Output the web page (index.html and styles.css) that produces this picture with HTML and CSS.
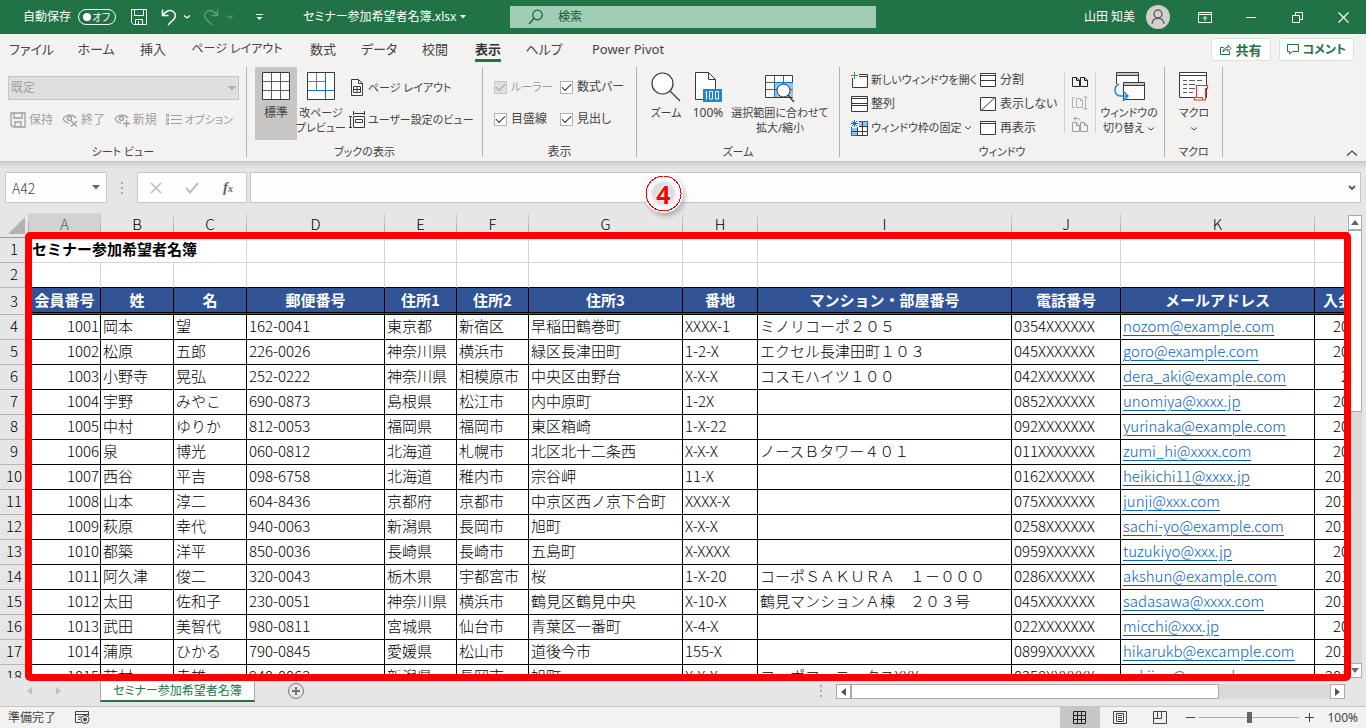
FILE: index.html
```html
<!DOCTYPE html>
<html lang="ja">
<head>
<meta charset="utf-8">
<title>セミナー参加希望者名簿.xlsx</title>
<link rel="stylesheet" href="styles.css">
</head>
<body>
<header class="titlebar">
  <div class="title-left">
    <span class="autosave">自動保存</span>
    <button class="toggle" aria-label="自動保存 オフ"><span class="knob"></span><span>オフ</span></button>
    <div class="quick">
      <button aria-label="上書き保存"><svg width="18" height="18" fill="none" stroke="#fff"><path d="M1.500 1.500h15v15h-13l-2-2zM4.500 1.500v6h9v-6M5.500 16.500v-5h7v5M8.500 16v-3"/></svg></button>
      <button class="drop" aria-label="元に戻す"><svg width="16" height="18" fill="none" stroke="#fff" stroke-width="1.500"><path d="M1.500 1.500v6h6M1.500 7.500C5 3 9 1.500 12 3.500c3 2 3 5 1 7.500l-6 6"/></svg><svg width="8" height="6" fill="none" stroke="#fff" stroke-width="1.300"><path d="M1 1.500l3 2.500 3-2.500"/></svg></button>
      <button class="drop faint" aria-label="やり直し"><svg width="16" height="18" fill="none" stroke="#fff" stroke-width="1.300"><path d="M13.500 1.500v6h-6M13.500 7.500C10 3 6 1.500 3 3.500c-3 2-3 5-1 7.500l6 6"/></svg><svg width="8" height="6" fill="none" stroke="#fff" stroke-width="1.300"><path d="M1 1.500l3 2.500 3-2.500"/></svg></button>
      <button class="custom" aria-label="カスタマイズ"><svg width="9" height="8" fill="none" stroke="#fff"><path d="M1 1.500h7" /><path d="M1.500 4h6L4.500 7z" fill="#fff" stroke="none"/></svg></button>
    </div>
    <button class="filename">セミナー参加希望者名簿.xlsx<svg width="6" height="4"><path d="M0 0h6L3 3.500z" fill="#fff"/></svg></button>
  </div>
  <label class="search"><svg width="16" height="16" fill="none" stroke="#185c37" stroke-width="1.200"><circle cx="9.500" cy="6" r="4.800"/><path d="M6 9.500L1 15"/></svg><input type="text" placeholder="検索"></label>
  <div class="title-right">
    <span class="user">山田 知美</span>
    <svg class="avatar" width="24" height="24" fill="none"><circle cx="12" cy="12" r="12" fill="#d2d0ce"/><circle cx="12" cy="9" r="4" stroke="#605e5c" stroke-width="1.400"/><path d="M6 19c0-3.500 2.500-5.800 6-5.800s6 2.300 6 5.800" stroke="#605e5c" stroke-width="1.400"/></svg>
    <button class="win" aria-label="リボンの表示オプション"><svg width="14" height="12" fill="none" stroke="#fff"><path d="M.5 1.500h13v10H.5zM.5 3.500h13M7 10V6M5 7.500L7 5.500l2 2"/></svg></button>
    <button class="win" aria-label="最小化"><svg width="10" height="10" stroke="#fff"><path d="M0 5.500h10"/></svg></button>
    <button class="win" aria-label="元に戻す"><svg width="11" height="11" fill="none" stroke="#fff"><path d="M.5 3.500h7v7h-7zM3.500 3V.5h7v7H8"/></svg></button>
    <button class="win" aria-label="閉じる"><svg width="11" height="11" fill="none" stroke="#fff" stroke-width="1.200"><path d="M.5.5l10 10M10.500.5l-10 10"/></svg></button>
  </div>
</header>

<nav class="tabs">
  <div class="tablist">
    <button>ファイル</button><button>ホーム</button><button>挿入</button><button class="long">ページ レイアウト</button><button>数式</button><button>データ</button><button>校閲</button><button class="on"><span>表示</span></button><button>ヘルプ</button><button>Power Pivot</button>
  </div>
  <div class="share">
    <button class="kanji"><svg width="12" height="11" fill="none" stroke="#217346"><path d="M3.500 3.500h-3v7h9v-3M3 8c.5-3 2-4.500 5-4.500V1l3 3.500-3 3V5.500C6 5.500 4.500 6 3 8z"/></svg>共有</button>
    <button><svg width="12" height="11" fill="none" stroke="#217346"><path d="M.5.5h11v7H5.500L2.500 10V7.500h-2z"/></svg>コメント</button>
  </div>
</nav>

<section class="ribbon">
  <div class="group g-view">
    <div class="body">
      <select disabled aria-label="シート ビュー"><option>既定</option></select>
      <div class="viewbtns">
        <button disabled><svg width="16" height="16" fill="none" stroke="#a19f9d" stroke-width="1.300"><path d="M1 1h14v14H3l-2-2zM4 1v5h8V1M5 15v-5h6v5"/></svg>保持</button>
        <button disabled><svg width="16" height="14" fill="none" stroke="#a19f9d" stroke-width="1.300"><path d="M1 6c3-5 10-5 13-1M1 6c2 3 4 4 6 4M9 8l6 5.500M15 8l-6 5.500"/><circle cx="7.500" cy="5.500" r="2"/></svg>終了</button>
        <button disabled><svg width="16" height="14" fill="none" stroke="#a19f9d" stroke-width="1.300"><path d="M1 6c3-5 10-5 13-1M1 6c2 3 4 4 6 4M9 10.500h7M12.500 7v7"/><circle cx="7.500" cy="5.500" r="2"/></svg>新規</button>
        <button class="kana" disabled><svg width="16" height="14" fill="none" stroke="#a19f9d"><path d="M.5 1.500h2v2h-2zM.5 5.500h2v2h-2zM.5 9.500h2v2h-2zM5 2.500h11M5 6.500h11M5 10.500h11"/></svg>オプション</button>
      </div>
    </div>
    <div class="caption">シート ビュー</div>
  </div>

  <div class="group g-book">
    <div class="body row">
      <button class="big on"><svg width="28" height="28" fill="none" stroke="#3b3a39"><path d="M.5.5h27v27H.5z" fill="#fff"/><path d="M9.500 1v26M18.500 1v26M1 9.500h26M1 18.500h26" stroke="#605e5c"/></svg><span>標準</span></button>
      <button class="big"><svg width="28" height="28" fill="none" stroke="#3b3a39"><path d="M.5.5h27v27H.5z" fill="#fff"/><path d="M9.500 1v17M1 9.500h17" stroke="#797775"/><path d="M18.500 1v26M1 18.500h26" stroke="#0078d4"/></svg><span>改ページ<br>プレビュー</span></button>
      <div class="stack">
        <button><svg width="16" height="18" fill="none" stroke="#3b3a39"><path d="M2.500.5h7l4 4v12h-11z" fill="#fff"/><path d="M9.500.5v4h4M4.500 7.500h7v6h-7zM8 7.500v6M4.500 10.500h7"/></svg>ページ レイアウト</button>
        <button><svg width="16" height="18" fill="none" stroke="#3b3a39"><path d="M4.500 5.500h11v11h-11z" fill="#fff"/><path d="M6.500 8.500h7v3h-7zM4.500 0v4M15.500 0v4M4.500 2.500h11M0 5.500h3M0 16.500h3M1.500 5.500v11"/></svg>ユーザー設定のビュー</button>
      </div>
    </div>
    <div class="caption">ブックの表示</div>
  </div>

  <div class="group g-show">
    <div class="body checks">
      <label class="dim"><input type="checkbox" checked disabled>ルーラー</label>
      <label><input type="checkbox" checked>数式バー</label>
      <label><input type="checkbox" checked>目盛線</label>
      <label><input type="checkbox" checked>見出し</label>
    </div>
    <div class="caption kanji">表示</div>
  </div>

  <div class="group g-zoom">
    <div class="body row">
      <button class="big"><svg width="30" height="28" fill="none" stroke="#3b3a39" stroke-width="1.200"><circle cx="11.500" cy="11.500" r="10.500" fill="#fff"/><path d="M19 19l10 10"/></svg><span>ズーム</span></button>
      <button class="big"><svg width="28" height="28" fill="none" stroke="#3b3a39"><path d="M1.500.5h13l7 7v20h-20z" fill="#fff"/><path d="M14.500.5v7h7"/><path d="M9 17h19v13H9z" fill="#1e88cf" stroke="none"/><path d="M11.500 20.500l1-1v8M15.500 19.500h3v7.500h-3zM21.500 19.500h3v7.500h-3z" stroke="#fff"/></svg><span class="pc">100%</span></button>
      <button class="big wide"><svg width="30" height="28" fill="none" stroke="#3b3a39"><path d="M.5.5h27v22H.5z" fill="#fff"/><path d="M10 8h18v14H10z" fill="#8fc5f0" stroke="none"/><path d="M9.500 1v21M18.500 1v21M1 7.500h27M1 14.500h27" stroke="#605e5c"/><path d="M9.500 22V7.500h18" stroke="#0078d4"/><circle cx="18.500" cy="15.500" r="6.500" fill="#fff"/><path d="M23 20l6 7" stroke-width="1.400"/></svg><span>選択範囲に合わせて<br>拡大/縮小</span></button>
    </div>
    <div class="caption">ズーム</div>
  </div>

  <div class="group g-window">
    <div class="body row">
      <div class="stack three first">
        <button><svg width="17" height="16" fill="none" stroke="#3b3a39"><path d="M1.500 6v9.500h15v-13H8" fill="#fff"/><path d="M8 4.500h8.500"/><path d="M3.500 0v7M0 3.500h7" stroke="#2e9e4a"/></svg>新しいウィンドウを開く</button>
        <button class="kanji"><svg width="17" height="16" fill="none" stroke="#3b3a39"><path d="M.5.5h16v15H.5z" fill="#fff"/><path d="M.5 2.500h16M.5 7.500h16M.5 9.500h16"/></svg>整列</button>
        <button><svg width="17" height="16" fill="none" stroke="#3b3a39"><path d="M.5 1.500h16v14H.5z" fill="#fff"/><path d="M8 2h9v4H8zM1 8h5v8H1z" fill="#8fc5f0" stroke="none"/><path d="M6.500 2v13M11.500 2v13M1 6.500h15M1 11.500h15"/><path d="M0 0h8v7H0z" fill="#f3f2f1" stroke="none"/><path d="M3.500 0v7M0 3.500h7M1 1l5 5M6 1L1 6M.5 8v7.500H6M8 1.500h8.500V6" stroke="#0078d4"/></svg>ウィンドウ枠の固定<svg class="chev" width="8" height="6" fill="none" stroke="#444"><path d="M1 1.500l3 2.500 3-2.500"/></svg></button>
      </div>
      <div class="stack three second">
        <button><svg width="17" height="15" fill="none" stroke="#3b3a39"><path d="M.5.5h15v13H.5z" fill="#fff"/><path d="M.5 2.500h15M.5 7.500h15"/></svg>分割</button>
        <button><svg width="17" height="15" fill="none" stroke="#3b3a39"><path d="M.5.5h15v13H.5z" fill="#fff"/><path d="M1 13.500l14-13"/></svg>表示しない</button>
        <button><svg width="17" height="15" fill="none" stroke="#3b3a39"><path d="M.5.5h15v13H.5z" fill="#fff"/><path d="M.5 2.500h15"/></svg>再表示</button>
      </div>
      <div class="stack icons">
        <button aria-label="並べて比較"><svg width="17" height="12" fill="none" stroke="#252423"><path d="M.5 1.500h4l3 3v6h-7zM4.500 1.500v3h3M8.500 1.500h4l3 3v6h-7zM12.500 1.500v3h3"/></svg></button>
        <button aria-label="同時にスクロール" disabled><svg width="17" height="16" fill="none" stroke="#b3b0ad"><path d="M2.500 2.500h-2v10h2M4.500 3.500h4l2 2v7h-6zM8.500 3.500v2h2M13.500 1v14M11.500 3l2-2 2 2M11.500 13l2 2 2-2"/></svg></button>
        <button aria-label="ウィンドウの位置を元に戻す" disabled><svg width="17" height="17" fill="none" stroke="#a19f9d"><path d="M.5 6.500h4l3 3v6h-7zM4.500 6.500v3h3M8.500 6.500h4l3 3v6h-7zM12.500 6.500v3h3M2 2.500h4c1 0 2 1 2 2M4 .5l-2 2 2 2"/></svg></button>
      </div>
      <button class="big switch"><svg width="31" height="28" fill="none" stroke="#3b3a39"><path d="M2.500 12V.5h22V10" fill="#fff"/><path d="M3 1h21v2H3z" fill="#c8c6c4" stroke="none"/><path d="M2.500 3.500h22"/><path d="M9.500 10.500h21v17h-21z" fill="#fff"/><path d="M10 11h20v2H10z" fill="#c8c6c4" stroke="none"/><path d="M9.500 13.500h21"/><path d="M5 12c-6 3-5 11 1 12h8M9 19l5 5-5 5" stroke="#1e88cf" stroke-width="1.500"/></svg><span>ウィンドウの<br>切り替え <svg class="chev" width="8" height="6" fill="none" stroke="#444"><path d="M1 1.500l3 2.500 3-2.500"/></svg></span></button>
    </div>
    <div class="caption">ウィンドウ</div>
  </div>

  <div class="group g-macro">
    <div class="body row">
      <button class="big"><svg width="30" height="28" fill="none" stroke="#3b3a39"><path d="M.5.5h27v25H.5z" fill="#fff"/><path d="M.5 3.500h27"/><path d="M4 8.500h4M10 8.500h6M18 8.500h5M4 12.500h4M10 12.500h6M4 16.500h4M10 16.500h6M4 20.500h4M10 20.500h4" stroke="#605e5c"/><path d="M17.500 25V13.500h11v3h-2V28H15.500v-2.500h8V28" fill="#fff" stroke="#e8383d" stroke-width="1.200"/></svg><span>マクロ<br><svg class="chev" width="8" height="6" fill="none" stroke="#444"><path d="M1 1.500l3 2.500 3-2.500"/></svg></span></button>
    </div>
    <div class="caption">マクロ</div>
  </div>
  <button class="collapse" aria-label="リボンを折りたたむ"><svg width="12" height="8" fill="none" stroke="#444" stroke-width="1.300"><path d="M1 6.500l5-4.500 5 4.500"/></svg></button>
</section>

<section class="formulabar">
  <label class="namebox"><input type="text" value="A42" aria-label="名前ボックス"><svg width="8" height="5"><path d="M0 0h8L4 4.500z" fill="#666"/></svg></label>
  <span class="dots"></span>
  <div class="fx">
    <button aria-label="キャンセル"><svg width="12" height="12" fill="none" stroke="#bdbdbd" stroke-width="1.600"><path d="M1 1l10 10M11 1L1 11"/></svg></button>
    <button aria-label="入力"><svg width="14" height="12" fill="none" stroke="#bdbdbd" stroke-width="2"><path d="M1 6l4 4.500L13 1"/></svg></button>
    <button class="fxb">f<small>x</small></button>
  </div>
  <label class="formula"><input type="text" aria-label="数式"><svg width="8" height="6" fill="none" stroke="#555" stroke-width="1.800"><path d="M1 1l3 3 3-3"/></svg></label>
  <div class="marker">4</div>
</section>

<main class="sheet">
  <div class="grid">
    <table>
      <colgroup><col class="w29"><col class="w72"><col class="w73"><col class="w73"><col class="w138"><col class="w72"><col class="w72"><col class="w154"><col class="w75"><col class="w254"><col class="w109"><col class="w194"><col class="w38"></colgroup>
      <thead>
        <tr class="letters"><th class="corner"><svg width="17" height="17"><path d="M17 0v17H0z" fill="#b2b2b2"/></svg></th><th class="sel">A</th><th>B</th><th>C</th><th>D</th><th>E</th><th>F</th><th>G</th><th>H</th><th>I</th><th>J</th><th>K</th><th></th></tr>
      </thead>
      <tbody>
        <tr class="plain"><th>1</th><td colspan="3" class="name">セミナー参加希望者名簿</td><td></td><td></td><td></td><td></td><td></td><td></td><td></td><td></td><td></td></tr>
        <tr class="plain last"><th>2</th><td></td><td></td><td></td><td></td><td></td><td></td><td></td><td></td><td></td><td></td><td></td><td></td></tr>
        <tr class="head"><th>3</th><td>会員番号</td><td>姓</td><td>名</td><td>郵便番号</td><td>住所1</td><td>住所2</td><td>住所3</td><td>番地</td><td>マンション・部屋番号</td><td>電話番号</td><td>メールアドレス</td><td>入会</td></tr>
        <tr><th>4</th><td>1001</td><td>岡本</td><td>望</td><td>162-0041</td><td>東京都</td><td>新宿区</td><td>早稲田鶴巻町</td><td>XXXX-1</td><td>ミノリコーポ２０５</td><td>0354XXXXXX</td><td><a href="#">nozom@example.com</a></td><td>20</td></tr>
        <tr><th>5</th><td>1002</td><td>松原</td><td>五郎</td><td>226-0026</td><td>神奈川県</td><td>横浜市</td><td>緑区長津田町</td><td>1-2-X</td><td>エクセル長津田町１０３</td><td>045XXXXXXX</td><td><a href="#">goro@example.com</a></td><td>20</td></tr>
        <tr><th>6</th><td>1003</td><td>小野寺</td><td>晃弘</td><td>252-0222</td><td>神奈川県</td><td>相模原市</td><td>中央区由野台</td><td>X-X-X</td><td>コスモハイツ１００</td><td>042XXXXXXX</td><td><a href="#">dera_aki@example.com</a></td><td>2</td></tr>
        <tr><th>7</th><td>1004</td><td>宇野</td><td>みやこ</td><td>690-0873</td><td>島根県</td><td>松江市</td><td>内中原町</td><td>1-2X</td><td></td><td>0852XXXXXX</td><td><a href="#">unomiya@xxxx.jp</a></td><td>20</td></tr>
        <tr><th>8</th><td>1005</td><td>中村</td><td>ゆりか</td><td>812-0053</td><td>福岡県</td><td>福岡市</td><td>東区箱崎</td><td>1-X-22</td><td></td><td>092XXXXXXX</td><td><a href="#">yurinaka@example.com</a></td><td>20</td></tr>
        <tr><th>9</th><td>1006</td><td>泉</td><td>博光</td><td>060-0812</td><td>北海道</td><td>札幌市</td><td>北区北十二条西</td><td>X-X-X</td><td>ノースＢタワー４０１</td><td>011XXXXXXX</td><td><a href="#">zumi_hi@xxxx.com</a></td><td>20</td></tr>
        <tr><th>10</th><td>1007</td><td>西谷</td><td>平吉</td><td>098-6758</td><td>北海道</td><td>稚内市</td><td>宗谷岬</td><td>11-X</td><td></td><td>0162XXXXXX</td><td><a href="#">heikichi11@xxxx.jp</a></td><td>201</td></tr>
        <tr><th>11</th><td>1008</td><td>山本</td><td>淳二</td><td>604-8436</td><td>京都府</td><td>京都市</td><td>中京区西ノ京下合町</td><td>XXXX-X</td><td></td><td>075XXXXXXX</td><td><a href="#">junji@xxx.com</a></td><td>201</td></tr>
        <tr><th>12</th><td>1009</td><td>萩原</td><td>幸代</td><td>940-0063</td><td>新潟県</td><td>長岡市</td><td>旭町</td><td>X-X-X</td><td></td><td>0258XXXXXX</td><td><a href="#">sachi-yo@example.com</a></td><td>201</td></tr>
        <tr><th>13</th><td>1010</td><td>都築</td><td>洋平</td><td>850-0036</td><td>長崎県</td><td>長崎市</td><td>五島町</td><td>X-XXXX</td><td></td><td>0959XXXXXX</td><td><a href="#">tuzukiyo@xxx.jp</a></td><td>20</td></tr>
        <tr><th>14</th><td>1011</td><td>阿久津</td><td>俊二</td><td>320-0043</td><td>栃木県</td><td>宇都宮市</td><td>桜</td><td>1-X-20</td><td>コーポＳＡＫＵＲＡ　１－０００</td><td>0286XXXXXX</td><td><a href="#">akshun@example.com</a></td><td>201</td></tr>
        <tr><th>15</th><td>1012</td><td>太田</td><td>佐和子</td><td>230-0051</td><td>神奈川県</td><td>横浜市</td><td>鶴見区鶴見中央</td><td>X-10-X</td><td>鶴見マンションＡ棟　２０３号</td><td>045XXXXXXX</td><td><a href="#">sadasawa@xxxx.com</a></td><td>201</td></tr>
        <tr><th>16</th><td>1013</td><td>武田</td><td>美智代</td><td>980-0811</td><td>宮城県</td><td>仙台市</td><td>青葉区一番町</td><td>X-4-X</td><td></td><td>022XXXXXXX</td><td><a href="#">micchi@xxx.jp</a></td><td>20</td></tr>
        <tr><th>17</th><td>1014</td><td>蒲原</td><td>ひかる</td><td>790-0845</td><td>愛媛県</td><td>松山市</td><td>道後今市</td><td>155-X</td><td></td><td>0899XXXXXX</td><td><a href="#">hikarukb@excample.com</a></td><td>201</td></tr>
        <tr><th>18</th><td>1015</td><td>荻村</td><td>幸雄</td><td>940-0063</td><td>新潟県</td><td>長岡市</td><td>旭町</td><td>X-X-X</td><td>コーポフェニックスXXX</td><td>0258XXXXXX</td><td><a href="#">yukii_o@example.com</a></td><td>201</td></tr>
      </tbody>
    </table>
  </div>
  <div class="vscroll">
    <button aria-label="上へ"><svg width="8" height="5"><path d="M0 5h8L4 0z" fill="#666"/></svg></button>
    <div class="vtrack"><div class="vthumb"></div></div>
    <button aria-label="下へ"><svg width="8" height="5"><path d="M0 0h8L4 5z" fill="#666"/></svg></button>
  </div>
  <div class="frame"></div>
</main>

<section class="sheettabs">
  <div class="arrows"><svg width="5" height="8"><path d="M5 0v8L0 4z" fill="#c0c0c0"/></svg><svg width="5" height="8"><path d="M0 0v8l5-4z" fill="#c0c0c0"/></svg></div>
  <button class="sheettab">セミナー参加希望者名簿</button>
  <button class="add" aria-label="新しいシート"><svg width="18" height="18" fill="none" stroke="#777"><circle cx="9" cy="9" r="7.500"/><path d="M9 5v8M5 9h8" stroke-width="2"/></svg></button>
  <span class="dots"></span>
  <div class="hscroll">
    <button aria-label="左へ"><svg width="5" height="8"><path d="M5 0v8L0 4z" fill="#555"/></svg></button>
    <div class="htrack"><div class="hthumb"></div></div>
    <button aria-label="右へ"><svg width="5" height="8"><path d="M0 0v8l5-4z" fill="#555"/></svg></button>
  </div>
</section>

<footer class="status">
  <span class="ready">準備完了</span>
  <svg width="15" height="13" fill="none" stroke="#444"><path d="M6 11.500H.5v-11h13V5M.5 3.500h13M3 6h3M3 8.500h2"/><circle cx="10" cy="8.500" r="4"/><circle cx="10" cy="8.500" r="1.500" fill="#444"/></svg>
  <div class="views">
    <button class="on" aria-label="標準"><svg width="14" height="14" fill="none" stroke="#222"><path d="M.5.5h12v12H.5zM4.500.5v12M8.500.5v12M.5 4.500h12M.5 8.500h12"/></svg></button>
    <button aria-label="ページ レイアウト"><svg width="14" height="14" fill="none" stroke="#444"><path d="M.5.5h13v12H.5zM3.500 2.500h7v8h-7zM5 4.500h4M5 6.500h4M5 8.500h4"/></svg></button>
    <button aria-label="改ページ プレビュー"><svg width="14" height="14" fill="none" stroke="#444"><path d="M.5.5h13v12H.5zM4.500.5v7M8.500.5v7M.5 7.500h8"/></svg></button>
  </div>
  <button class="pm" aria-label="縮小"><svg width="9" height="9" stroke="#444"><path d="M0 4.500h9"/></svg></button>
  <input type="range" min="0" max="100" value="50" aria-label="ズーム">
  <button class="pm" aria-label="拡大"><svg width="9" height="9" stroke="#444"><path d="M0 4.500h9M4.500 0v9"/></svg></button>
  <span class="pct">100%</span>
</footer>
</body>
</html>
```
FILE: styles.css
```css
* { box-sizing: border-box; }
body {
  margin: 0;
  height: 100vh;
  display: flex;
  flex-direction: column;
  overflow: hidden;
  background: #e6e6e6;
  color: #444;
  font: 12px/16px "Noto Sans", "Noto Sans CJK JP", sans-serif;
  font-feature-settings: "palt";
  white-space: nowrap;
}
button, input, select { font: inherit; font-feature-settings: inherit; color: inherit; }
button { border: 0; padding: 0; background: none; white-space: nowrap; }
input { border: 0; padding: 0; background: none; min-width: 0; outline: 0; }
svg { display: block; flex: none; }

/* title bar */
.titlebar { height: 34px; flex: none; display: grid; grid-template-columns: 510px 366px 1fr; align-items: center; background: #217346; color: #fff; }
.title-left { display: flex; align-items: center; padding-left: 23px; }
.autosave { width: 55px; }
.toggle { width: 38px; height: 16px; display: flex; align-items: center; justify-content: space-between; border: 1px solid #fff; border-radius: 8px; padding: 0 5px 0 4px; font-size: 10px; line-height: 12px; }
.knob { width: 8px; height: 8px; border-radius: 4px; background: #fff; }
.quick { display: flex; align-items: center; padding-left: 14px; width: 187px; gap: 13px; }
.drop { display: flex; align-items: center; gap: 6px; }
.drop.faint { opacity: .3; }
.custom { padding-left: 8px; }
.filename { display: flex; align-items: center; gap: 4px; }
.search { height: 22px; display: flex; align-items: center; gap: 14px; padding-left: 18px; background: #9fcdb5; }
.search input { flex: 1; }
.search input::placeholder { color: #185c37; opacity: 1; }
.title-right { display: flex; align-items: center; justify-content: flex-end; }
.avatar { margin: 0 12px 0 11px; }
.win { width: 46px; height: 34px; display: grid; place-items: center; }

/* ribbon tabs */
.tabs { height: 32px; flex: none; display: flex; justify-content: space-between; background: #f3f2f1; }
.tablist { display: grid; grid-template-columns: 63px 66px 48px 120px 52px 60px 52px 54px 58px 110px; font-size: 13px; }
.tablist button { padding-bottom: 2px; }
.tablist .long { font-size: 12px; }
.tablist .on { font-weight: 700; color: #333; display: grid; justify-items: center; }
.tablist .on span { border-bottom: 3px solid #217346; height: 22px; line-height: 18px; align-self: end; margin-bottom: 2px; }
.share { display: flex; gap: 8px; padding: 4px 12px 4px 0; }
.share button { display: flex; align-items: center; gap: 4px; padding: 0 7px; height: 23px; background: #fff; border: 1px solid #e1dfdd; border-radius: 2px; color: #217346; font-weight: 700; }
.share .kanji { font-size: 13px; padding: 0 8px; }

/* ribbon */
.ribbon { height: 95px; flex: none; display: flex; background: #f3f2f1; padding: 1px 0 4px; font-size: 11px; }
.group { flex: none; display: flex; flex-direction: column; justify-content: space-between; border-right: 1px solid #b3b0ad; height: 90px; }
.caption { text-align: center; line-height: 11px; }
.ribbon .kanji { font-size: 12px; }
.row { display: flex; }
.g-view { width: 247px; }
.g-book { width: 236px; }
.g-show { width: 154px; }
.g-zoom { width: 203px; }
.g-window { width: 325px; }
.g-macro { width: 58px; }
.g-view .body { padding: 9px 7px 0 8px; }
.g-view select { width: 100%; height: 24px; border: 1px solid #c8c6c4; background: #e1dfdd; color: #a19f9d; appearance: none; padding: 0 2px; opacity: 1; font-size: 12px;
  background-image: linear-gradient(45deg, transparent 50%, #b3b0ad 50%), linear-gradient(-45deg, transparent 50%, #b3b0ad 50%);
  background-size: 4px 4px; background-position: right 6px top 9px, right 2px top 9px; background-repeat: no-repeat; }
.viewbtns { display: flex; justify-content: space-between; padding: 12px 6px 0 2px; }
.viewbtns button { display: flex; align-items: center; gap: 3px; color: #a19f9d; font-size: 12px; }
.viewbtns .kana { font-size: 11px; }
.big { flex: none; width: 42px; height: 73px; display: flex; flex-direction: column; align-items: center; padding-top: 5px; gap: 5px; line-height: 15px; }
.big svg { overflow: visible; }
.big span { display: block; }
.big.on { background: #c8c6c4; font-size: 12px; }
.big .pc { font-size: 12px; }
.g-book .row { padding-left: 8px; gap: 3px; }
.g-book .row .stack { padding: 12px 0 0 4px; gap: 14px; }
.stack { display: flex; flex-direction: column; align-items: flex-start; }
.stack button { display: flex; align-items: center; gap: 3px; height: 18px; }
.checks { display: grid; grid-template-columns: 66px 1fr; row-gap: 16px; padding: 12px 0 0 11px; font-size: 12px; }
.checks label { display: flex; align-items: center; gap: 4px; }
.checks .dim { color: #a19f9d; font-size: 11px; }
.checks input { appearance: none; width: 13px; height: 13px; margin: 0; border: 1px solid #b3b0ad; background: #fff; display: grid; place-items: center; }
.checks input::after { content: ""; width: 8px; height: 4px; border: solid #333; border-width: 0 0 1px 1px; transform: rotate(-45deg) translate(1px, -1px); }
.checks .dim input { background: #e1dfdd; border-color: #c8c6c4; }
.checks .dim input::after { border-color: #a19f9d; }
.g-zoom .row { padding-left: 8px; }
.big.wide { width: 102px; padding-top: 8px; gap: 2px; }
.g-window .row { padding-left: 11px; }
.three { gap: 6px; padding-top: 4px; }
.first { width: 129px; }
.second { width: 84px; font-size: 12px; }
.icons { border: solid #d2d0ce; border-width: 0 1px; width: 32px; height: 60px; margin-top: 6px; padding-left: 7px; justify-content: space-between; }
.big.switch { width: 66px; }
.chev { display: inline-block; vertical-align: middle; }
.g-macro .row { padding-left: 8px; }
.collapse { margin-left: auto; align-self: flex-end; padding: 0 8px 0 0; }

/* formula bar */
.formulabar { height: 52px; flex: none; display: flex; padding: 10px 5px; position: relative; border-top: 1px solid #c8c8c8; background: linear-gradient(#cfcfcf, #e6e6e6 7px); }
.namebox, .fx, .formula { display: flex; align-items: center; height: 31px; border: 1px solid #c6c6c6; background: #fdfdfd; }
.namebox { width: 102px; padding: 0 6px; justify-content: space-between; font: 300 14px/20px "Noto Sans CJK JP", sans-serif; }
.namebox input { width: 60px; }
.dots { width: 30px; display: grid; place-items: center; }
.dots::after { content: ""; width: 2px; height: 12px; background: repeating-linear-gradient(#aaa 0 2px, transparent 2px 5px); }
.fx { width: 110px; }
.fx button { flex: 1; display: grid; place-items: center; }
.fx .fxb { display: block; font: italic 700 15px/20px "Liberation Serif", serif; color: #666; }
.fx small { font-size: 10px; }
.formula { flex: 1; margin-left: 3px; padding-right: 4px; }
.formula input { flex: 1; }
.marker { position: absolute; left: 644px; top: 12px; width: 39px; height: 39px; border-radius: 50%; display: grid; place-items: center; z-index: 5;
  background: radial-gradient(circle, #ddd 0 10px, #fff 14px 17px, #f00 17px 18px, #fff 18px);
  box-shadow: 2px 3px 5px rgba(0, 0, 0, .25);
  color: #f00; font: 700 25px/36px "Noto Sans", sans-serif; text-shadow: 0 0 3px #fff, 0 0 3px #fff, 0 0 2px #fff; }

/* worksheet */
.sheet { flex: 1; min-height: 0; display: flex; position: relative; }
.grid { flex: 1; min-width: 0; overflow: hidden; background: #fff; }
table { table-layout: fixed; width: 1353px; border-collapse: separate; border-spacing: 0; font: 300 15px/22px "Noto Sans CJK JP", sans-serif; font-feature-settings: normal; color: #000; }
.w29 { width: 29px; } .w38 { width: 38px; } .w72 { width: 72px; } .w73 { width: 73px; } .w75 { width: 75px; } .w109 { width: 109px; }
.w138 { width: 138px; } .w154 { width: 154px; } .w194 { width: 194px; } .w254 { width: 254px; }
th { font-weight: 300; padding: 0; background: #e6e6e6; color: #000; text-align: center; vertical-align: top; height: 25px; border-bottom: 1px solid #b5b5b5; border-right: 1px solid #b5b5b5; overflow: hidden; }
.letters th { border-right: 1px solid; border-image: linear-gradient(#d8d8d8, #999) 1; }
.letters .sel { background: #d2d2d2; color: #217346; }
.letters .corner { vertical-align: middle; }
.corner svg { margin-left: 8px; }
td { height: 25px; padding: 0 2px; border: solid #000; border-width: 0 1px 1px 0; vertical-align: top; overflow: hidden; background: #fff; }
td:nth-child(2) { text-align: right; padding-right: 1px; }
td:nth-child(13) { text-align: right; padding: 0 3px 0 0; }
.plain td { border-color: #d4d4d4; }
.plain.last td { border-bottom-color: #000; }
.plain .name { text-align: left; font-weight: 700; padding-left: 3px; }
.head td { height: 27px; border-bottom: 3px double #000; background: #305496; color: #fff; font-weight: 700; text-align: center; vertical-align: middle; }
.head td:nth-child(2) { text-align: center; padding: 0 2px; }
.head td:nth-child(13) { text-align: left; padding: 0 0 0 8px; }
.head th { vertical-align: middle; }
td a { color: #0563c1; text-decoration: underline; text-underline-offset: 3px; }
.vscroll { width: 18px; flex: none; display: flex; flex-direction: column; padding: 2px 4px 0 0; }
.vscroll button { height: 15px; display: grid; place-items: center; background: #fff; border: 1px solid #ababab; }
.vtrack { flex: 1; background: #dadada; }
.vthumb { height: 42%; background: #fff; border: 1px solid #ababab; }
.frame { position: absolute; inset: 19px 15px -3px 25px; border: 7px solid #f00; border-radius: 5px; z-index: 4; }

/* sheet tabs */
.sheettabs { height: 28px; flex: none; display: flex; padding-right: 21px; align-items: flex-start; }
.arrows { width: 100px; height: 26px; display: flex; align-items: center; gap: 24px; padding-left: 27px; }
.sheettab { width: 155px; height: 24px; padding-top: 3px; background: #fff; color: #217346; border: solid #ababab; border-width: 0 1px; border-bottom: 2px solid #217346; }
.add { padding: 4px 0 0 32px; }
.sheettabs .dots { margin-left: auto; height: 26px; }
.hscroll { width: 509px; height: 15px; margin-top: 6px; display: flex; }
.hscroll button { width: 15px; display: grid; place-items: center; background: #fff; border: 1px solid #ababab; }
.htrack { flex: 1; background: #dadada; }
.hthumb { width: 368px; height: 15px; background: #fff; border: 1px solid #ababab; }

/* status bar */
.status { height: 22px; flex: none; display: flex; align-items: center; background: #f3f2f1; border-top: 1px solid #c6c6c6; padding: 0 8px; }
.ready { width: 67px; }
.views { display: flex; margin-left: auto; align-self: stretch; }
.views button { width: 40px; display: grid; place-items: center; }
.views .on { background: #c6c6c6; }
.pm { padding-left: 6px; }
.pm + input { appearance: none; width: 100px; height: 12px; margin: 0 0 0 4px; background: linear-gradient(#aaa, #aaa) center / 100% 1px no-repeat; }
.status input::-webkit-slider-thumb { appearance: none; width: 5px; height: 11px; background: #666; border: 0; }
.pct { width: 44px; text-align: right; }
```
